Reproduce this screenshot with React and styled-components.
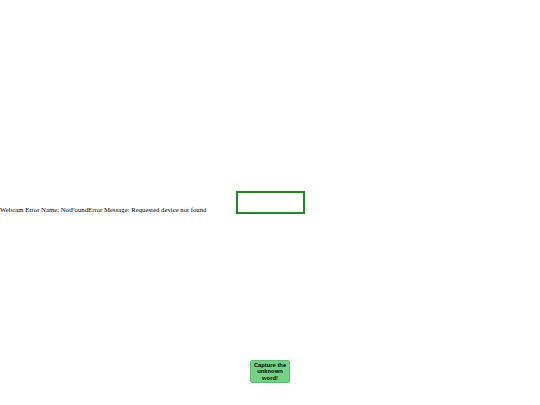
import React from 'react'
import styled, { createGlobalStyle } from 'styled-components'

const GlobalStyle = createGlobalStyle`
    html, body {
        margin: 0;
        padding: 0;
        background: #ffffff;
    }
    body {
        font-family: "Liberation Serif", "Times New Roman", serif;
    }
`

export default function App() {
    return (
        <Page>
            <GlobalStyle />
            <Stage>
                <ErrorText>
                    Webcam Error Name: NotFoundError Message: Requested device not found
                </ErrorText>
                <WordBox />
                <span />
            </Stage>
            <Footer>
                <CaptureButton>Capture the unknown word!</CaptureButton>
            </Footer>
        </Page>
    )
}

const Page = styled.div`
    height: 405px;
    display: flex;
    flex-direction: column;
`

const Stage = styled.div`
    display: grid;
    grid-template-columns: 1fr auto 1fr;
    align-items: end;
    margin-top: 191px;
`

const ErrorText = styled.span`
    font-family: "Liberation Serif", "Times New Roman", serif;
    font-size: 6.75px;
    color: #000;
    white-space: nowrap;
    line-height: 8px;
`

const WordBox = styled.div`
    width: 65px;
    height: 19px;
    border: 2px solid #1f8a24;
    box-sizing: content-box;
    background: #fff;
`

const Footer = styled.div`
    margin-top: auto;
    display: flex;
    justify-content: center;
    padding-bottom: 22px;
`

const CaptureButton = styled.button`
    width: 40px;
    height: 23px;
    padding: 0 2px;
    border: 1px solid #5cbf6c;
    border-radius: 2px;
    background: #72d384;
    color: #000;
    font-family: "Liberation Sans", Arial, sans-serif;
    font-weight: bold;
    font-size: 5.8px;
    line-height: 6.5px;
    text-align: center;
    cursor: pointer;
`
